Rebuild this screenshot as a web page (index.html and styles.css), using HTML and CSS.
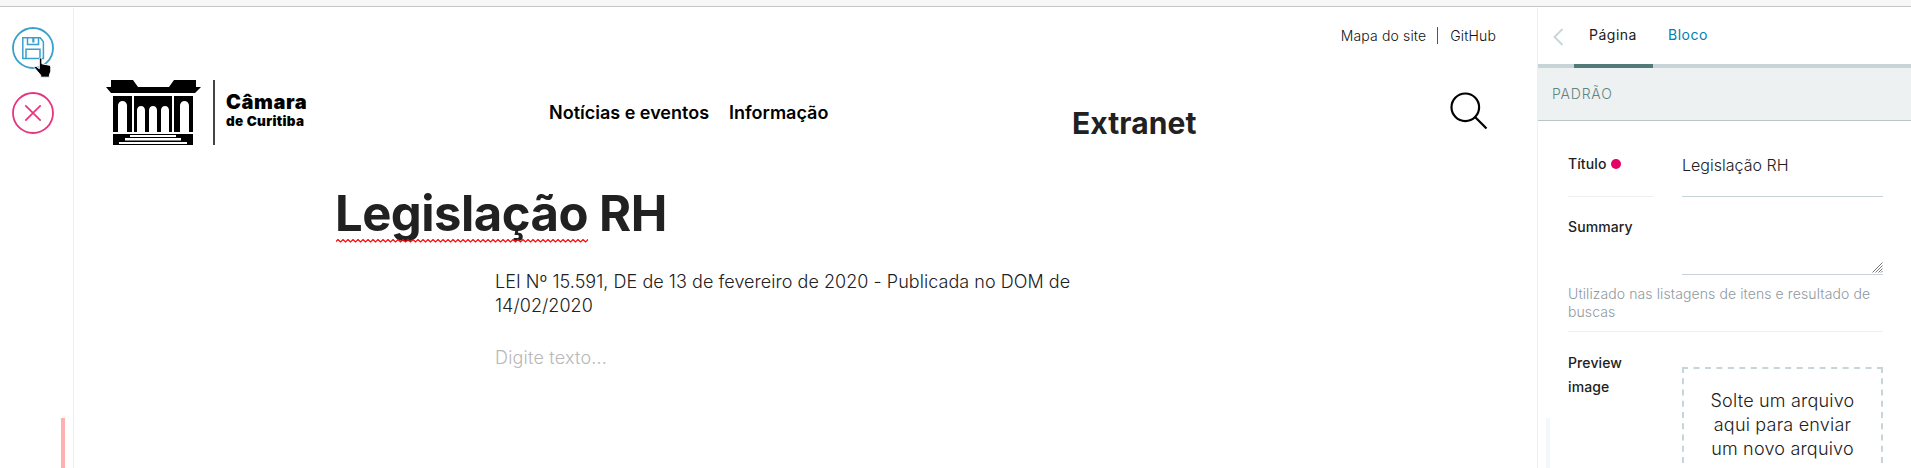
FILE: index.html
```html
<!DOCTYPE html>
<html lang="pt-br">
<head>
<meta charset="utf-8">
<title>Legislação RH</title>
<link rel="stylesheet" href="styles.css">
</head>
<body>
<div class="topbar"></div>
<div class="app">
  <aside class="toolbar">
    <button class="tool save" aria-label="Salvar">
      <svg width="42" height="42" viewBox="0 0 42 42" fill="none" stroke="#3a9fcb">
        <circle cx="21" cy="21" r="20" stroke-width="1.8"/>
        <path d="M10.8 10.8h17.4l3.2 4v16.6H10.8z" stroke-width="1.5"/>
        <path d="M15.5 11v6.6h11V11M21 11v4.5M21.7 11v4.5M14 31v-8.8h14V31" stroke-width="1.5"/>
      </svg>
      <svg class="pointer" width="20" height="22" viewBox="0 0 20 22">
        <path d="M6.3 2.3c0-1.800 2.600-1.800 2.600 0v4.500l7.400 1.400q1.500.4 1.500 2v4l-1.400 4v2H7.700v-2L1.200 10.500q.8-1.600 2.400-.8l2.700 2z" fill="#000" stroke="#fff" stroke-width="1"/>
      </svg>
    </button>
    <button class="tool" aria-label="Cancelar">
      <svg width="42" height="42" viewBox="0 0 42 42" fill="none" stroke="#e8337f">
        <circle cx="21" cy="21" r="20" stroke-width="1.8"/>
        <path d="M13.3 13.3 28.7 28.7M28.7 13.3 13.3 28.7" stroke-width="1.7"/>
      </svg>
    </button>
    <div class="toolbar-handle"></div>
  </aside>
  <main class="page">
    <nav class="tools-nav"><a>Mapa do site</a><i class="bar"></i><a>GitHub</a></nav>
    <header class="header">
      <div class="logo">
        <svg width="95" height="65" viewBox="0 0 95 65">
          <path d="M5 0h22l5 7h31l5-7h22v7h5l-6 6H5L0 7h5z"/>
          <path d="M7 16h19v36H7zM28 16h38v36H28zM68 16h19v36H68zM7 54h80v11H7z"/>
          <path fill="#fff" d="M12 52V25q1-4 4.500-4t4.500 4v27zM74 52V25q1-4 4.500-4t4.500 4v27zM31 52V30q.5-4 4-4t4 4v22zM43 52V30q.5-4 4-4t4 4v22zM55 52V30q.5-4 4-4t4 4v22z"/>
          <path fill="#fff" d="M24 55h46v2H24zM19 58h56v2.500H19zM13 62h68v2H13z"/>
        </svg>
        <i class="logo-rule"></i>
        <div class="logo-text"><span class="logo-main">Câmara</span><span class="logo-sub">de Curitiba</span></div>
      </div>
      <nav class="main-nav"><a>Notícias e eventos</a><a>Informação</a></nav>
      <div class="extranet">Extranet</div>
      <svg class="search" width="38" height="38" viewBox="0 0 38 38" fill="none" stroke="#000" stroke-width="2.2">
        <circle cx="15.300" cy="15.300" r="13.800"/><path d="M24.800 24.800 36.500 36.500"/>
      </svg>
    </header>
    <h1 class="title"><span class="misspelled">Legislação<svg class="squiggle" width="252" height="4"><defs><pattern id="wave" width="5" height="4" patternUnits="userSpaceOnUse"><path d="M-.5 3 2 .500 4.500 3 7 .500" fill="none" stroke="#f00" stroke-width="1.200"/></pattern></defs><rect width="252" height="4" fill="url(#wave)"/></svg></span> <span>RH</span></h1>
    <div class="blocks">
      <p class="text">LEI Nº 15.591, DE de 13 de fevereiro de 2020 - Publicada no DOM de 14/02/2020</p>
      <p class="placeholder">Digite texto...</p>
    </div>
  </main>
  <aside class="sidebar">
    <div class="tabs">
      <svg class="back" width="11" height="18" viewBox="0 0 11 18" fill="none" stroke="#c7d5d8" stroke-width="1.800"><path d="M9.500 1 1.500 9l8 8"/></svg>
      <a class="tab active">Página</a>
      <a class="tab link">Bloco</a>
    </div>
    <div class="section">PADRÃO</div>
    <div class="field field-title">
      <label class="label">Título<i class="required"></i></label>
      <div class="input">Legislação RH</div>
    </div>
    <div class="field field-summary">
      <label class="label">Summary</label>
      <div class="textarea"><svg width="11" height="11" viewBox="0 0 11 11" stroke="#777" stroke-width="1"><path d="M.5 10.500l10-10M3.500 10.500l7-7M6.500 10.500l4-4M9 10.500l1.500-1.500"/></svg></div>
    </div>
    <p class="help">Utilizado nas listagens de itens e resultado de<br>buscas</p>
    <div class="field field-preview">
      <label class="label">Preview<br>image</label>
      <div class="dropzone">
        <svg class="dash" width="201" height="120" fill="none" stroke="#c7d5d8" stroke-width="2"><path d="M0 1H201" stroke-dasharray="6 5.470"/><path d="M1 0V120M200 0V120" stroke-dasharray="6 5.250"/></svg>
        Solte um arquivo<br>aqui para enviar<br>um novo arquivo
      </div>
    </div>
    <div class="sidebar-handle"></div>
  </aside>
</div>
</body>
</html>
```
FILE: styles.css
```css
* { box-sizing: border-box; }
body { margin: 0; height: 468px; overflow: hidden; background: #fff; color: #212121; font-family: Inter, "Liberation Sans", sans-serif; }
.topbar { height: 7px; background: #f7f7f7; border-bottom: 1px solid #c4c5c5; }
.app { display: flex; height: 461px; }
.toolbar { position: relative; width: 74px; margin-top: 1px; padding: 19px 0 0 12px; border-right: 1px solid #edf0f1; display: flex; flex-direction: column; gap: 23px; }
.tool { position: relative; width: 42px; height: 42px; padding: 0; border: 0; background: none; }
.tool svg { display: block; }
.tool .pointer { position: absolute; left: 21px; top: 30px; }
.toolbar-handle { position: absolute; left: 61px; top: 410px; width: 4px; height: 50px; background: #ffb0b0; }
.page { width: 1463px; }
.tools-nav { display: flex; align-items: center; height: 17px; margin: 20px 41px 0 0; justify-content: flex-end; font-size: 14px; letter-spacing: .14px; font-weight: 300; color: #111; }
.bar { width: 1px; height: 17px; margin: 0 12px 0 11px; background: #555; }
.header { display: flex; height: 65px; margin-top: 36px; padding-left: 32px; color: #000; }
.logo { display: flex; width: 443px; }
.logo-rule { width: 2px; height: 65px; margin: 0 11px 0 12px; background: #444; }
.logo-text { display: flex; flex-direction: column; white-space: nowrap; font-weight: 900; padding-top: 10px; }
.logo-main { font-size: 20px; line-height: 24px; letter-spacing: .6px; }
.logo-sub { font-size: 13.5px; line-height: 14px; letter-spacing: .35px; }
.main-nav { display: flex; width: 523px; gap: 20px; padding-top: 22px; font-size: 18px; line-height: 22px; font-weight: 600; white-space: nowrap; }
.extranet { width: 378px; padding-top: 25px; color: #212121; font-size: 30px; line-height: 36px; letter-spacing: .1px; font-weight: 700; }
.search { margin-top: 12px; flex: none; }
.title { margin: 39px 0 0 261px; font-size: 49px; letter-spacing: -.52px; line-height: 60px; font-weight: 700; white-space: nowrap; }
.misspelled { position: relative; display: inline-block; }
.squiggle { position: absolute; left: 1px; top: 55px; }
.blocks { width: 605px; margin: 26px 0 0 421px; font-size: 18px; letter-spacing: .04px; line-height: 24px; font-weight: 300; }
.text { margin: 0; }
.placeholder { margin: 28px 0 0; color: #b8b8b8; letter-spacing: .2px; }
.sidebar { position: relative; width: 374px; margin-top: 1px; border-left: 1px solid #edf0f1; }
.tabs { display: flex; height: 60px; border-bottom: 4px solid #c7d5d8; font-size: 14px; letter-spacing: .5px; white-space: nowrap; }
.back { flex: none; margin: 20px 10px 0 15px; }
.tab { height: 60px; width: 79px; padding: 18px 0 0 15px; line-height: 18px; }
.active { border-bottom: 4px solid #527a78; }
.link { color: #007eb1; }
.section { height: 53px; background: #edf1f2; border-bottom: 1px solid #b8c6c8; padding: 17px 0 0 14px; color: #5f8583; font-size: 14px; letter-spacing: .8px; line-height: 18px; font-weight: 300; }
.field { display: flex; margin: 0 28px 0 30px; justify-content: space-between; }
.label { width: 86px; font-size: 14px; letter-spacing: .1px; font-weight: 500; line-height: 24px; }
.field-title { height: 76px; }
.field-title .label { display: flex; align-items: center; height: 76px; border-bottom: 1px solid #edf1f2; padding-top: 10px; }
.required { width: 10px; height: 10px; margin-left: 5px; border-radius: 50%; background: #e40166; }
.input { width: 201px; height: 76px; padding-top: 34px; line-height: 20px; border-bottom: 1px solid #c7d5d8; font-size: 16px; letter-spacing: .02px; font-weight: 300; }
.field-summary { height: 78px; }
.field-summary .label { padding-top: 18px; }
.textarea { display: flex; width: 201px; height: 78px; border-bottom: 1px solid #c7d5d8; justify-content: flex-end; align-items: flex-end; padding-bottom: 1px; }
.help { height: 57px; margin: 0 28px 0 30px; padding-top: 10px; border-bottom: 1px solid #edf1f2; color: #8f999e; font-size: 14px; letter-spacing: .1px; line-height: 18px; font-weight: 300; white-space: nowrap; }
.field-preview .label { padding-top: 19px; }
.dropzone { position: relative; width: 201px; height: 101px; margin-top: 35px; padding-top: 22px; text-align: center; font-size: 18px; letter-spacing: .2px; line-height: 24px; font-weight: 300; white-space: nowrap; }
.dash { position: absolute; left: 0; top: 0; }
.sidebar-handle { position: absolute; left: 8px; top: 410px; width: 4px; height: 50px; background: #f3f8fc; }
```
